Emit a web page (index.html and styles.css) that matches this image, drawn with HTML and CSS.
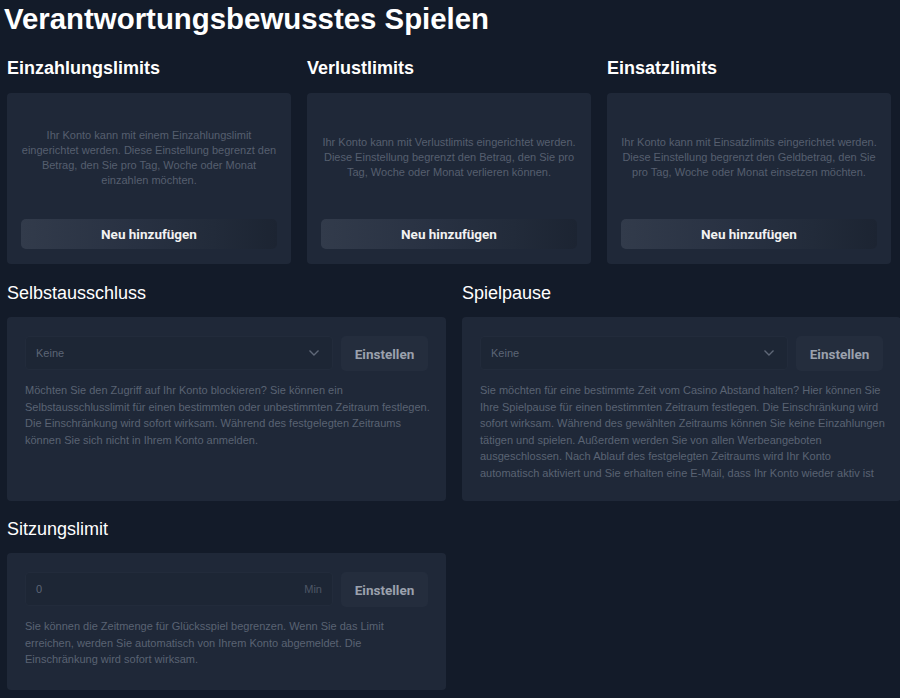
FILE: index.html
```html
<!DOCTYPE html>
<html lang="de">
<head>
    <meta charset="UTF-8">
    <meta name="viewport" content="width=device-width, initial-scale=1.0">
    <title>Verantwortungsbewusstes Spielen</title>
    <link rel="stylesheet" href="styles.css">
</head>
<body>
    <div class="page">
        <h1>Verantwortungsbewusstes Spielen</h1>

        <!-- Limits -->
        <div class="limits">
            <div class="limit">
                <h2>Einzahlungslimits</h2>
                <div class="card card-limit">
                    <div class="limit-text">
                        <p>Ihr Konto kann mit einem Einzahlungslimit eingerichtet werden. Diese Einstellung begrenzt den Betrag, den Sie pro Tag, Woche oder Monat einzahlen möchten.</p>
                    </div>
                    <button class="btn-add">Neu hinzufügen</button>
                </div>
            </div>
            <div class="limit">
                <h2>Verlustlimits</h2>
                <div class="card card-limit">
                    <div class="limit-text">
                        <p>Ihr Konto kann mit Verlustlimits eingerichtet werden. Diese Einstellung begrenzt den Betrag, den Sie pro Tag, Woche oder Monat verlieren können.</p>
                    </div>
                    <button class="btn-add">Neu hinzufügen</button>
                </div>
            </div>
            <div class="limit">
                <h2>Einsatzlimits</h2>
                <div class="card card-limit">
                    <div class="limit-text">
                        <p>Ihr Konto kann mit Einsatzlimits eingerichtet werden. Diese Einstellung begrenzt den Geldbetrag, den Sie pro Tag, Woche oder Monat einsetzen möchten.</p>
                    </div>
                    <button class="btn-add">Neu hinzufügen</button>
                </div>
            </div>
        </div>

        <!-- Selbstausschluss / Spielpause -->
        <div class="pair">
            <div class="block">
                <h3>Selbstausschluss</h3>
                <div class="card card-setting card-tall">
                    <div class="controls">
                        <div class="field">
                            <span>Keine</span>
                            <svg class="chevron" width="12" height="8" viewBox="0 0 12 8"><path d="M1.5 1.5 6 6l4.5-4.5" fill="none" stroke="#5f6878" stroke-width="1.4"/></svg>
                        </div>
                        <button class="btn-set">Einstellen</button>
                    </div>
                    <p class="desc">Möchten Sie den Zugriff auf Ihr Konto blockieren? Sie können ein Selbstausschlusslimit für einen bestimmten oder unbestimmten Zeitraum festlegen. Die Einschränkung wird sofort wirksam. Während des festgelegten Zeitraums können Sie sich nicht in Ihrem Konto anmelden.</p>
                </div>
            </div>
            <div class="block">
                <h3>Spielpause</h3>
                <div class="card card-setting card-tall">
                    <div class="controls">
                        <div class="field">
                            <span>Keine</span>
                            <svg class="chevron" width="12" height="8" viewBox="0 0 12 8"><path d="M1.5 1.5 6 6l4.5-4.5" fill="none" stroke="#5f6878" stroke-width="1.4"/></svg>
                        </div>
                        <button class="btn-set">Einstellen</button>
                    </div>
                    <p class="desc">Sie möchten für eine bestimmte Zeit vom Casino Abstand halten? Hier können Sie Ihre Spielpause für einen bestimmten Zeitraum festlegen. Die Einschränkung wird sofort wirksam. Während des gewählten Zeitraums können Sie keine Einzahlungen tätigen und spielen. Außerdem werden Sie von allen Werbeangeboten ausgeschlossen. Nach Ablauf des festgelegten Zeitraums wird Ihr Konto automatisch aktiviert und Sie erhalten eine E-Mail, dass Ihr Konto wieder aktiv ist</p>
                </div>
            </div>
        </div>

        <!-- Sitzungslimit -->
        <div class="pair pair-last">
            <div class="block">
                <h3>Sitzungslimit</h3>
                <div class="card card-setting card-short">
                    <div class="controls">
                        <div class="field">
                            <span>0</span>
                            <span class="unit">Min</span>
                        </div>
                        <button class="btn-set">Einstellen</button>
                    </div>
                    <p class="desc">Sie können die Zeitmenge für Glücksspiel begrenzen. Wenn Sie das Limit erreichen, werden Sie automatisch von Ihrem Konto abgemeldet. Die Einschränkung wird sofort wirksam.</p>
                </div>
            </div>
        </div>
    </div>
</body>
</html>
```

FILE: styles.css
```css
html, body {
    margin: 0;
    padding: 0;
    background-color: #131b29;
    overflow: hidden;
}
body {
    font-family: "Liberation Sans", Arial, sans-serif;
    color: #ffffff;
}
.page {
    padding: 0 0 0 7px;
    width: 910px;
}
h1 {
    margin: 0;
    margin-left: -3px;
    padding-top: 3px;
    font-size: 29.4px;
    line-height: 32px;
    font-weight: bold;
}
h2 {
    margin: 22px 0 14px;
    font-size: 18px;
    line-height: 22px;
    font-weight: bold;
}
h3 {
    margin: 0 0 13px;
    font-size: 18px;
    line-height: 22px;
    font-weight: normal;
}
.limits {
    display: grid;
    grid-template-columns: 284px 284px 284px;
    gap: 16px;
}
.card {
    background-color: #1f2838;
    border-radius: 4px;
    box-sizing: border-box;
}
.card-limit {
    height: 171px;
    padding: 15px 14px;
    display: flex;
    flex-direction: column;
}
.limit-text {
    flex: 1;
    display: flex;
    align-items: center;
    justify-content: center;
    margin-bottom: 12px;
}
.limit-text p {
    margin: 0;
    font-size: 11px;
    line-height: 15px;
    color: #565f6f;
    text-align: center;
}
.btn-add {
    height: 30px;
    border: none;
    border-radius: 5px;
    background: linear-gradient(90deg, #323b4b 0%, #283142 45%, #222b3a 75%, #1c2432 100%);
    color: #f2f2f2;
    font-family: Roboto, "Liberation Sans", sans-serif;
    font-weight: bold;
    font-size: 13.5px;
}
.pair {
    display: grid;
    grid-template-columns: 439px 439px;
    gap: 16px;
    margin-top: 18px;
}
.pair-last {
    margin-top: 17px;
}
.card-setting {
    padding: 19px 12px 18px 18px;
}
.card-tall {
    height: 184px;
}
.card-short {
    height: 137px;
}
.controls {
    display: flex;
    gap: 8px;
}
.field {
    width: 308px;
    height: 34px;
    box-sizing: border-box;
    background-color: #1d2635;
    border: 1px solid #222b3b;
    border-radius: 4px;
    display: flex;
    align-items: center;
    justify-content: space-between;
    padding: 0 10px;
    font-size: 11px;
    color: #5c6575;
}
.unit {
    color: #4d5666;
}
.chevron {
    margin-right: 2px;
}
.btn-set {
    width: 87px;
    height: 35px;
    border: none;
    border-radius: 5px;
    background-color: #242d3d;
    color: #9ba1ad;
    font-family: Roboto, "Liberation Sans", sans-serif;
    font-weight: bold;
    font-size: 13.5px;
}
.desc {
    margin: 11px 0 0;
    font-size: 11px;
    line-height: 16.5px;
    color: #5a6373;
}
```
